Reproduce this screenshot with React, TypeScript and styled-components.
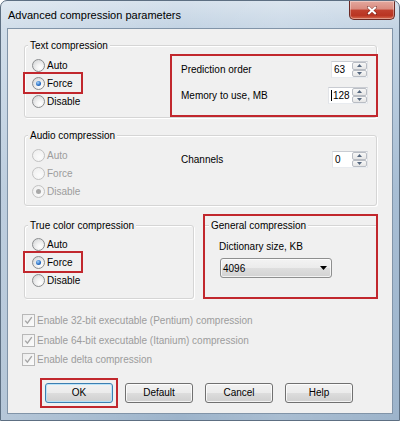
import React from 'react';
import styled, { createGlobalStyle, css } from 'styled-components';

const RED = '#c1272d';

const Global = createGlobalStyle`
  html, body { margin: 0; padding: 0; background: #ffffff; }
  body {
    font-family: "Liberation Sans", Arial, sans-serif;
    font-size: 10px;
    color: #000;
  }
  * { box-sizing: border-box; }
`;

const Window = styled.div`
  width: 400px;
  height: 421px;
  display: flex;
  flex-direction: column;
  border: 1px solid #5d6f82;
  border-radius: 7px 7px 0 0;
  background:
    linear-gradient(90deg, rgba(255,255,255,0.25) 0%, rgba(255,255,255,0) 45%, rgba(255,255,255,0.12) 70%, rgba(255,255,255,0) 100%),
    linear-gradient(180deg, #d6e1ec 0%, #c2d3e3 7%, #a8bed4 45%, #9db4cb 100%);
  overflow: hidden;
`;

const TitleBar = styled.div`
  height: 27px;
  display: flex;
  align-items: flex-start;
  padding: 0 4px 0 7px;
`;

const Title = styled.div`
  align-self: center;
  font-family: "Liberation Sans", Arial, sans-serif;
  font-size: 11px;
  line-height: 14px;
  color: #000;
  margin-top: 1px;
`;

const CloseButton = styled.div`
  margin-left: auto;
  width: 46px;
  height: 19px;
  border: 1px solid #6b2a24;
  border-top: none;
  border-radius: 0 0 5px 5px;
  background: linear-gradient(180deg, #e3a89e 0%, #d98a7e 45%, #c0412f 50%, #b93422 80%, #d66a4f 100%);
  box-shadow: inset 0 0 0 1px rgba(255, 255, 255, 0.35);
  display: flex;
  align-items: center;
  justify-content: center;
`;

const Client = styled.div`
  flex: 1;
  margin: 0 6px 6px 6px;
  border: 1px solid #8194a8;
  background: #f0f0f0;
  padding: 0 15px 0 16px;
  display: flex;
  flex-direction: column;
`;

const Group = styled.div<{ $mt?: number; $w?: number; $h?: number; $topOnly?: boolean }>`
  position: relative;
  margin-top: ${p => p.$mt ?? 0}px;
  ${p => p.$w !== undefined && css`width: ${p.$w}px; flex-shrink: 0;`}
  ${p => p.$h !== undefined && css`height: ${p.$h}px;`}
  border: 1px solid #d5d5d5;
  border-radius: 3px;
  box-shadow: 1px 1px 0 #ffffff, inset 1px 1px 0 #ffffff;
  ${p => p.$topOnly && css`
    border-left: none;
    border-right: none;
    border-bottom: none;
    border-radius: 0;
    box-shadow: 0 1px 0 #ffffff inset;
  `}
`;

const Legend = styled.span<{ $left?: number }>`
  position: absolute;
  top: -7px;
  left: ${p => p.$left ?? 3}px;
  padding: 0 2px;
  line-height: 13px;
  background: #f0f0f0;
  white-space: nowrap;
`;

const GroupBody = styled.div`
  display: flex;
  padding-top: 8px;
`;

const RadioCol = styled.div<{ $pt?: number; $pb?: number; $w?: number }>`
  width: ${p => p.$w ?? 145}px;
  flex-shrink: 0;
  display: flex;
  flex-direction: column;
  padding: ${p => p.$pt ?? 2}px 0 ${p => p.$pb ?? 5}px 7px;
`;

const RadioRow = styled.label<{ $disabled?: boolean; $marked?: boolean }>`
  display: flex;
  align-items: center;
  gap: 2px;
  height: 18px;
  color: ${p => (p.$disabled ? '#9c9c9c' : '#000')};
  white-space: nowrap;
  ${p => p.$marked && css`
    width: 56px;
    margin-left: -7px;
    padding-left: 7px;
    outline: 2px solid ${RED};
  `}
`;

const RadioDot = styled.span<{ $on?: boolean; $off?: boolean }>`
  width: 13px;
  height: 13px;
  border-radius: 50%;
  flex-shrink: 0;
  display: flex;
  align-items: center;
  justify-content: center;
  border: 1px solid ${p => (p.$off ? '#c2c2c2' : '#8b8d8f')};
  background: ${p =>
    p.$off
      ? 'radial-gradient(circle at 60% 65%, #fbfbfb 0%, #ececec 100%)'
      : 'radial-gradient(circle at 65% 70%, #ffffff 0%, #f2f2f2 35%, #cdcfd1 100%)'};
  &::after {
    content: '';
    width: 5px;
    height: 5px;
    border-radius: 50%;
    display: ${p => (p.$on ? 'block' : 'none')};
    background: ${p =>
      p.$off
        ? '#a8a8a8'
        : 'radial-gradient(circle at 40% 35%, #a9d4fa 0%, #2b72c8 55%, #0d3f8a 100%)'};
  }
`;

const Panel = styled.div<{ $marked?: boolean }>`
  flex: 1;
  margin-right: -2px;
  align-self: flex-start;
  border: 2px solid ${p => (p.$marked ? RED : 'transparent')};
  padding: 5px 8px 11px 9px;
  display: flex;
  flex-direction: column;
  gap: 9px;
`;

const FieldRow = styled.div`
  display: flex;
  align-items: center;
  justify-content: space-between;
  height: 17px;
`;

const Spin = styled.div<{ $w: number }>`
  width: ${p => p.$w}px;
  height: 17px;
  display: flex;
  background: #ffffff;
  border: 1px solid;
  border-color: #c9ccd2 #e2e4e8 #e8ebef #e2e4e8;
`;

const SpinField = styled.div`
  flex: 1;
  display: flex;
  align-items: center;
  padding-left: 2px;
  line-height: 15px;
`;

const Caret = styled.span`
  width: 1px;
  height: 11px;
  background: #000;
  margin-right: 1px;
`;

const SpinBtns = styled.div`
  width: 15px;
  display: flex;
  flex-direction: column;
`;

const SpinBtn = styled.div`
  flex: 1;
  display: flex;
  align-items: center;
  justify-content: center;
  border: 1px solid #b9bdc4;
  border-radius: 2px;
  background: linear-gradient(180deg, #f7f7f7 0%, #e6e6e6 100%);
`;

const BottomRow = styled.div`
  display: flex;
  align-items: flex-start;
  margin-top: 8px;
`;

const MarkFrame = styled.div`
  flex: 1;
  margin-left: 9px;
  margin-right: -1px;
  height: 85px;
  border: 2px solid ${RED};
  padding-top: 9px;
  display: flex;
  flex-direction: column;
`;

const GeneralBody = styled.div`
  padding: 14px 0 0 14px;
  display: flex;
  flex-direction: column;
`;

const Label = styled.div`
  line-height: 13px;
  white-space: nowrap;
`;

const Combo = styled.div`
  margin-top: 5px;
  margin-left: 1px;
  width: 112px;
  height: 20px;
  border: 1px solid #8e8f8f;
  border-radius: 3px;
  background: linear-gradient(180deg, #f3f3f3 0%, #ebebeb 50%, #dedede 51%, #d2d2d2 100%);
  box-shadow: inset 0 0 0 1px rgba(255, 255, 255, 0.7);
  display: flex;
  align-items: center;
  justify-content: space-between;
  padding: 0 4px 0 2px;
`;

const CheckList = styled.div`
  margin-top: 12px;
  margin-left: -2px;
  display: flex;
  flex-direction: column;
`;

const CheckRow = styled.div`
  height: 19.5px;
  display: flex;
  align-items: center;
  gap: 2px;
  color: #9c9c9c;
  white-space: nowrap;
`;

const CheckBox = styled.span`
  width: 13px;
  height: 13px;
  flex-shrink: 0;
  border: 1px solid #b8b8b8;
  background: linear-gradient(135deg, #ededed 0%, #fbfbfb 100%);
  display: flex;
  align-items: center;
  justify-content: center;
`;

const ButtonRow = styled.div`
  display: flex;
  gap: 12px;
  margin-top: 13px;
  padding-left: 21px;
`;

const ButtonMark = styled.div`
  margin: -5px;
  padding: 3px;
  border: 2px solid ${RED};
  display: flex;
`;

const Button = styled.div<{ $default?: boolean }>`
  width: 68px;
  height: 20px;
  display: flex;
  align-items: center;
  justify-content: center;
  border: 1px solid ${p => (p.$default ? '#3c7fb1' : '#707070')};
  border-radius: 3px;
  background: linear-gradient(180deg, #f2f2f2 0%, #ebebeb 50%, #dddddd 51%, #cfcfcf 100%);
  box-shadow: inset 0 0 0 1px ${p => (p.$default ? 'rgba(180, 225, 250, 0.9)' : 'rgba(255, 255, 255, 0.75)')};
`;

const UpArrow = () => (
  <svg width="5" height="3" viewBox="0 0 5 3">
    <path d="M0 3 L2.5 0 L5 3 Z" fill="#55677f" />
  </svg>
);
const DownArrow = () => (
  <svg width="5" height="3" viewBox="0 0 5 3">
    <path d="M0 0 L5 0 L2.5 3 Z" fill="#55677f" />
  </svg>
);

const SpinBox: React.FC<{ value: string; w: number; caret?: boolean }> = ({ value, w, caret }) => (
  <Spin $w={w}>
    <SpinField>
      {caret && <Caret />}
      {value}
    </SpinField>
    <SpinBtns>
      <SpinBtn><UpArrow /></SpinBtn>
      <SpinBtn><DownArrow /></SpinBtn>
    </SpinBtns>
  </Spin>
);

const Radio: React.FC<{ label: string; on?: boolean; disabled?: boolean; marked?: boolean }> = ({
  label,
  on,
  disabled,
  marked,
}) => (
  <RadioRow $disabled={disabled} $marked={marked}>
    <RadioDot $on={on} $off={disabled} />
    <span>{label}</span>
  </RadioRow>
);

const Check: React.FC<{ label: string }> = ({ label }) => (
  <CheckRow>
    <CheckBox>
      <svg width="9" height="9" viewBox="0 0 9 9">
        <path d="M1.2 4.6 L3.4 7.2 L7.8 1.2" fill="none" stroke="#a6a6a6" strokeWidth="1.4" />
      </svg>
    </CheckBox>
    <span>{label}</span>
  </CheckRow>
);

export default function App() {
  return (
    <>
      <Global />
      <Window>
        <TitleBar>
          <Title>Advanced compression parameters</Title>
          <CloseButton>
            <svg width="10" height="9" viewBox="0 0 10 9">
              <path d="M1 1 L9 8 M9 1 L1 8" stroke="#4a1510" strokeWidth="3" strokeLinecap="round" opacity="0.45" />
              <path d="M1.2 1 L8.8 8 M8.8 1 L1.2 8" stroke="#ffffff" strokeWidth="2" />
            </svg>
          </CloseButton>
        </TitleBar>
        <Client>
          <Group $mt={16}>
            <Legend>Text compression</Legend>
            <GroupBody>
              <RadioCol>
                <Radio label="Auto" />
                <Radio label="Force" on marked />
                <Radio label="Disable" />
              </RadioCol>
              <Panel $marked>
                <FieldRow>
                  <Label>Prediction order</Label>
                  <SpinBox value="63" w={37} />
                </FieldRow>
                <FieldRow>
                  <Label>Memory to use, MB</Label>
                  <SpinBox value="128" w={40} caret />
                </FieldRow>
              </Panel>
            </GroupBody>
          </Group>

          <Group $mt={17}>
            <Legend>Audio compression</Legend>
            <GroupBody>
              <RadioCol>
                <Radio label="Auto" disabled />
                <Radio label="Force" disabled />
                <Radio label="Disable" on disabled />
              </RadioCol>
              <Panel>
                <FieldRow>
                  <Label>Channels</Label>
                  <SpinBox value="0" w={36} />
                </FieldRow>
              </Panel>
            </GroupBody>
          </Group>

          <BottomRow>
            <Group $mt={11} $w={170} $h={74}>
              <Legend>True color compression</Legend>
              <RadioCol $pt={9} $pb={0}>
                <Radio label="Auto" />
                <Radio label="Force" on marked />
                <Radio label="Disable" />
              </RadioCol>
            </Group>
            <MarkFrame>
              <Group $topOnly>
                <Legend $left={4}>General compression</Legend>
                <GeneralBody>
                  <Label>Dictionary size, KB</Label>
                  <Combo>
                    <span>4096</span>
                    <svg width="7" height="4" viewBox="0 0 7 4">
                      <path d="M0 0 H7 L3.5 4 Z" fill="#000" />
                    </svg>
                  </Combo>
                </GeneralBody>
              </Group>
            </MarkFrame>
          </BottomRow>

          <CheckList>
            <Check label="Enable 32-bit executable (Pentium) compression" />
            <Check label="Enable 64-bit executable (Itanium) compression" />
            <Check label="Enable delta compression" />
          </CheckList>

          <ButtonRow>
            <ButtonMark>
              <Button $default>OK</Button>
            </ButtonMark>
            <Button>Default</Button>
            <Button>Cancel</Button>
            <Button>Help</Button>
          </ButtonRow>
        </Client>
      </Window>
    </>
  );
}
